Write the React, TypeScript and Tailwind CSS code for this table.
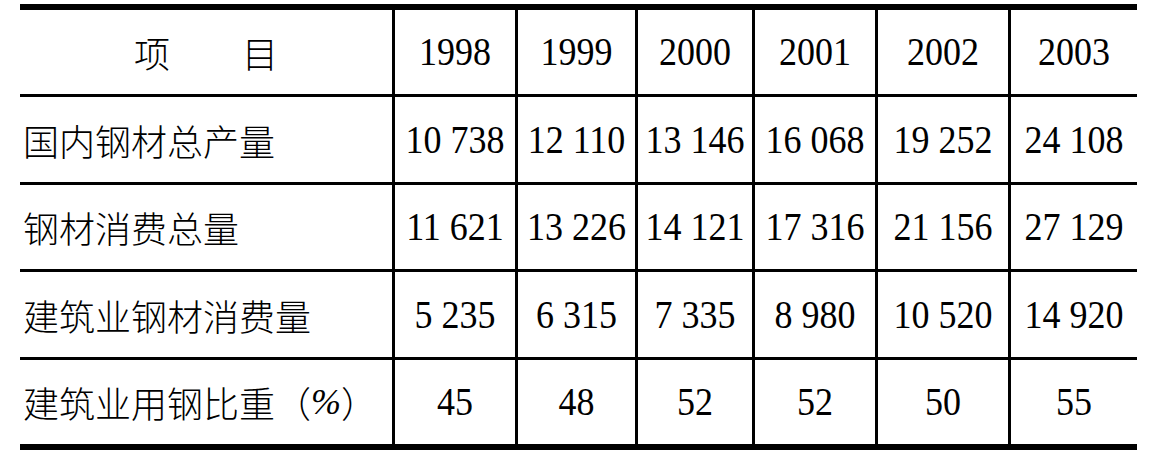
import React from "react";

const widths = ["w-[372px]", "w-[123px]", "w-[120px]", "w-[117px]", "w-[123px]", "w-[133px]", "w-[129px]"];

const rows: { label: string; values: string[]; h: string }[] = [
  { label: "国内钢材总产量", values: ["10 738", "12 110", "13 146", "16 068", "19 252", "24 108"], h: "h-[88px]" },
  { label: "钢材消费总量", values: ["11 621", "13 226", "14 121", "17 316", "21 156", "27 129"], h: "h-[87px]" },
  { label: "建筑业钢材消费量", values: ["5 235", "6 315", "7 335", "8 980", "10 520", "14 920"], h: "h-[88px]" },
  { label: "建筑业用钢比重（", values: ["45", "48", "52", "52", "50", "55"], h: "h-[87px]" },
];

const years = ["1998", "1999", "2000", "2001", "2002", "2003"];

function Num({ children }: { children: React.ReactNode }) {
  return (
    <span className="inline-block scale-y-110 whitespace-pre font-['Liberation_Serif','Times_New_Roman',serif] font-normal">
      {children}
    </span>
  );
}

export default function App() {
  return (
    <div className="w-[1153px] h-[462px] bg-white pt-[4px] pl-[20px] text-black text-[36px] leading-none">
      <div className="w-[1117px] border-y-[6px] border-black">
        {/* header */}
        <div className="flex h-[84px]">
          <div
            className={`${widths[0]} flex items-center justify-center font-['Noto_Sans_CJK_SC',sans-serif] font-light whitespace-pre`}
          >
            项　　目
          </div>
          {years.map((y, i) => (
            <div key={y} className={`${widths[i + 1]} border-l-[3px] border-black flex items-center justify-center`}>
              <Num>{y}</Num>
            </div>
          ))}
        </div>

        {rows.map((r, ri) => (
          <div key={r.label} className={`flex ${r.h} border-t-[3px] border-black`}>
            <div
              className={`${widths[0]} flex items-center pl-[3px] font-['Noto_Sans_CJK_SC',sans-serif] font-light whitespace-pre`}
            >
              {r.label}
              {ri === 3 && (
                <>
                  <span className="font-['Liberation_Serif',serif] font-normal italic">%</span>）
                </>
              )}
            </div>
            {r.values.map((v, i) => (
              <div key={i} className={`${widths[i + 1]} border-l-[3px] border-black flex items-center justify-center`}>
                <Num>{v}</Num>
              </div>
            ))}
          </div>
        ))}
      </div>
    </div>
  );
}
